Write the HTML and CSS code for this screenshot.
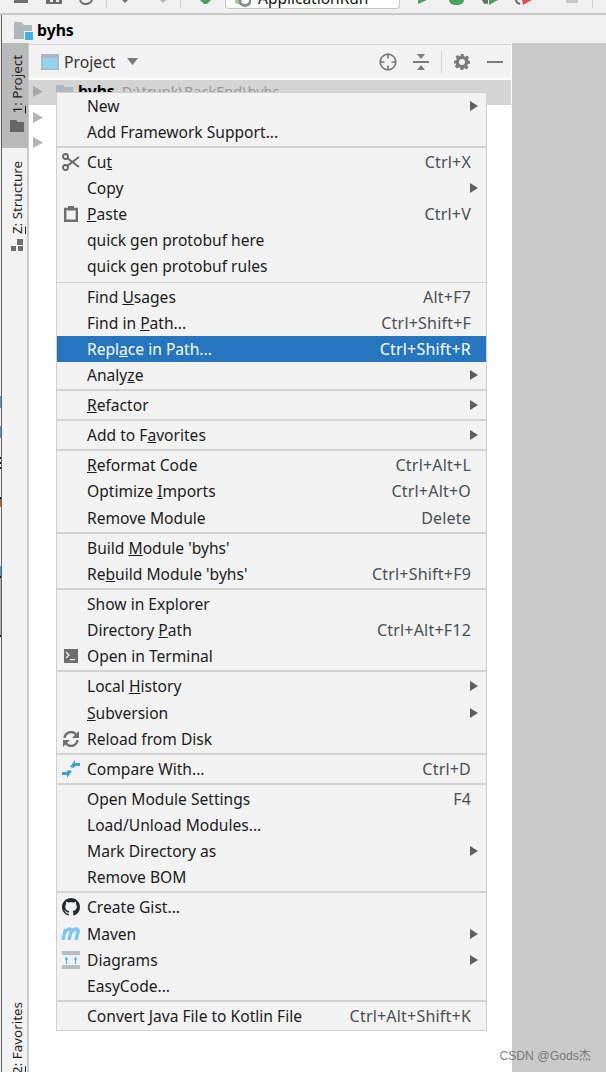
FILE: index.html
```html
<!DOCTYPE html>
<html lang="en">
<head>
<meta charset="utf-8">
<title>byhs</title>
<link rel="stylesheet" href="styles.css">
</head>
<body>
<div class="app">
  <header class="toolbar">
    <svg class="tb-left" width="225" height="13" viewBox="0 0 225 13">
      <rect x="14" y="0" width="14" height="3" fill="#6e6e6e"/>
      <path d="M46 0h16v4H46z" fill="#6e6e6e"/><path d="M50 0h3v2h-3zM56 0h3v2h-3z" fill="#eee"/>
      <path d="M80 0c1 3 3 4 5.500 4S91 3 92 0" fill="none" stroke="#6e6e6e" stroke-width="2"/>
      <rect x="106" y="0" width="1" height="8" fill="#cfcfcf"/>
      <path d="M122 0h6l-3 3z" fill="#6e6e6e"/>
      <path d="M160 0h6l-3 3z" fill="#b5b5b5"/>
      <rect x="180" y="0" width="1" height="8" fill="#cfcfcf"/>
      <path d="M200 0h11l-4 4h-3z" fill="#4f9e5c"/>
    </svg>
    <div class="run-config">
      <svg width="16" height="9" viewBox="0 0 16 9"><circle cx="3" cy="1" r="4" fill="#a9cf9f"/><circle cx="10" cy="1" r="5.500" fill="none" stroke="#8a8f93" stroke-width="3"/></svg>
      <span class="run-name">ApplicationRun</span>
    </div>
    <svg class="tb-right" width="206" height="13" viewBox="0 0 206 13">
      <path d="M18 0h9l-9 4z" fill="#4ca35a"/>
      <path d="M49 0h15c0 3-3 5-7.500 5S49 3 49 0z" fill="#4ca35a"/>
      <path d="M82 0h6v3l-4 1zM89 0h9l-9 5z" fill="#4ca35a"/><path d="M82 0h6v4l-4-1z" fill="#6e6e6e"/>
      <path d="M116 0c0 2 1 3 4 4" fill="none" stroke="#6e6e6e" stroke-width="2"/><path d="M122 0h10l-9 5z" fill="#e0505a"/>
      <rect x="166" y="0" width="12" height="3" fill="#c9c9c9"/>
      <rect x="192" y="0" width="1" height="8" fill="#cfcfcf"/>
    </svg>
  </header>

  <div class="crumb">
    <svg width="19" height="19" viewBox="0 0 19 19"><path d="M0 1h7l3 3h8v14H0z" fill="#adb7bf"/><rect x="11" y="11" width="8" height="8" fill="#3eb2e6"/><path d="M10 10h1v9h-1zM10 10h9v1h-9z" fill="#f0f0f0"/></svg>
    <span class="crumb-name">byhs</span>
  </div>

  <div class="workspace">
    <aside class="tool-strip">
      <div class="tool tool-on">
        <span class="tool-label"><u>1</u>: Project</span>
        <svg width="14" height="12" viewBox="0 0 14 12"><path d="M0 0h6l2 2h6v10H0z" fill="#666"/></svg>
      </div>
      <div class="tool tool-second">
        <span class="tool-label"><u>Z</u>: Structure</span>
        <svg width="14" height="13" viewBox="0 0 14 13"><path d="M7 0h6v6H7zM1 7h5v5H1zM8 7h5v5H8z" fill="#6e6e6e"/></svg>
      </div>
      <div class="tool tool-bottom">
        <span class="tool-label"><u>2</u>: Favorites</span>
      </div>
    </aside>
    <main class="panel">
      <div class="panel-head">
        <svg class="head-icon" width="18" height="16" viewBox="0 0 18 16"><rect width="18" height="16" fill="#adb7bf"/><rect x="1.500" y="4" width="15" height="10.500" fill="#93d3ef"/></svg>
        <span class="head-title">Project</span>
        <svg class="head-caret" width="11" height="7" viewBox="0 0 11 7"><path d="M0 0h11L5.500 7z" fill="#777"/></svg>
        <span class="head-space"></span>
        <svg width="18" height="18" viewBox="0 0 18 18" fill="none" stroke="#7a7a7a" stroke-width="1.700"><circle cx="9" cy="9" r="7.800"/><path d="M9 1v4.500M9 12.500V17M1 9h4.500M12.500 9H17"/></svg>
        <svg class="gap-collapse" width="16" height="18" viewBox="0 0 16 18"><path d="M0 8h16v2H0z" fill="#7a7a7a"/><path d="M4 1h8L8 6zM4 17h8l-4-5z" fill="#7a7a7a"/></svg>
        <span class="head-sep"></span>
        <svg class="gap-gear" width="16" height="16" viewBox="0 0 16 16"><path fill="#7a7a7a" fill-rule="evenodd" d="M6.500 0h3l.4 2.200 1.300.6L13.100 1.500l2.100 2.100-1.300 1.900.6 1.300L16 6.700v3l-2.200.4-.6 1.300 1.300 1.900-2.100 2.100-1.900-1.300-1.300.6L9.500 16h-3l-.4-2.200-1.300-.6-1.900 1.300L.8 12.400l1.300-1.900-.6-1.300L0 9.700v-3l2.200-.4.6-1.300L1.500 3.100l2.100-2.100 1.900 1.300 1.300-.6zM8 5a3 3 0 100 6 3 3 0 000-6z"/></svg>
        <svg class="gap-minus" width="16" height="2" viewBox="0 0 16 2"><rect width="16" height="2" fill="#7a7a7a"/></svg>
      </div>
      <div class="tree">
        <div class="tree-row tree-row-on">
          <svg class="tree-arrow" width="10" height="11" viewBox="0 0 10 11"><path d="M0 0l10 5.500L0 11z" fill="#a8a8a8"/></svg>
          <svg class="tree-folder" width="17" height="14" viewBox="0 0 17 14"><path d="M0 0h7l2 2h8v12H0z" fill="#adb7bf"/></svg>
          <span class="tree-name">byhs</span>
          <span class="tree-path">D:\trunk\BackEnd\byhs</span>
        </div>
        <div class="tree-row">
          <svg class="tree-arrow" width="10" height="11" viewBox="0 0 10 11"><path d="M0 0l10 5.500L0 11z" fill="#b4b4b4"/></svg>
        </div>
        <div class="tree-row">
          <svg class="tree-arrow" width="10" height="11" viewBox="0 0 10 11"><path d="M0 0l10 5.500L0 11z" fill="#b4b4b4"/></svg>
        </div>
      </div>
    </main>
    <div class="backdrop"></div>
  </div>

  <div class="desk-edge"></div>

  <nav class="menu">
    <div class="item"><span class="ico"></span><span class="lbl">New</span><i class="arrow"></i></div>
    <div class="item"><span class="ico"></span><span class="lbl">Add Framework Support...</span></div>
    <hr class="sep">
    <div class="item"><span class="ico"><svg width="18" height="18" viewBox="0 0 18 18" fill="none" stroke="#666" stroke-width="1.800"><circle cx="3.500" cy="3.500" r="2.500"/><circle cx="3.500" cy="14.500" r="2.500"/><path d="M5.500 5.200L17 14M5.500 12.800L17 4"/></svg></span><span class="lbl">Cu<u>t</u></span><span class="key">Ctrl+X</span></div>
    <div class="item"><span class="ico"></span><span class="lbl">Copy</span><i class="arrow"></i></div>
    <div class="item"><span class="ico"><svg width="14" height="16" viewBox="0 0 14 16" fill="none" stroke="#6e6e6e" stroke-width="2.400"><path d="M4 3H1.200v11.800h11.600V3H10"/><path d="M4 0h6v4.500H4z" fill="#6e6e6e" stroke="none"/></svg></span><span class="lbl"><u>P</u>aste</span><span class="key">Ctrl+V</span></div>
    <div class="item"><span class="ico"></span><span class="lbl">quick gen protobuf here</span></div>
    <div class="item"><span class="ico"></span><span class="lbl">quick gen protobuf rules</span></div>
    <hr class="sep">
    <div class="item"><span class="ico"></span><span class="lbl">Find <u>U</u>sages</span><span class="key">Alt+F7</span></div>
    <div class="item"><span class="ico"></span><span class="lbl">Find in <u>P</u>ath...</span><span class="key">Ctrl+Shift+F</span></div>
    <div class="item item-on"><span class="ico"></span><span class="lbl">Repl<u>a</u>ce in Path...</span><span class="key">Ctrl+Shift+R</span></div>
    <div class="item"><span class="ico"></span><span class="lbl">Analy<u>z</u>e</span><i class="arrow"></i></div>
    <hr class="sep">
    <div class="item"><span class="ico"></span><span class="lbl"><u>R</u>efactor</span><i class="arrow"></i></div>
    <hr class="sep">
    <div class="item"><span class="ico"></span><span class="lbl">Add to F<u>a</u>vorites</span><i class="arrow"></i></div>
    <hr class="sep">
    <div class="item"><span class="ico"></span><span class="lbl"><u>R</u>eformat Code</span><span class="key">Ctrl+Alt+L</span></div>
    <div class="item"><span class="ico"></span><span class="lbl">Optimize <u>I</u>mports</span><span class="key">Ctrl+Alt+O</span></div>
    <div class="item"><span class="ico"></span><span class="lbl">Remove Module</span><span class="key">Delete</span></div>
    <hr class="sep">
    <div class="item"><span class="ico"></span><span class="lbl">Build <u>M</u>odule 'byhs'</span></div>
    <div class="item"><span class="ico"></span><span class="lbl">Re<u>b</u>uild Module 'byhs'</span><span class="key">Ctrl+Shift+F9</span></div>
    <hr class="sep">
    <div class="item"><span class="ico"></span><span class="lbl">Show in Explorer</span></div>
    <div class="item"><span class="ico"></span><span class="lbl">Directory <u>P</u>ath</span><span class="key">Ctrl+Alt+F12</span></div>
    <div class="item"><span class="ico"><svg width="14" height="14" viewBox="0 0 14 14"><rect width="14" height="14" fill="#6e6e6e"/><path d="M2 3l3 3-3 3" fill="none" stroke="#f2f2f2" stroke-width="1.300"/><path d="M6 10h5v1.200H6z" fill="#f2f2f2"/></svg></span><span class="lbl">Open in Terminal</span></div>
    <hr class="sep">
    <div class="item"><span class="ico"></span><span class="lbl">Local <u>H</u>istory</span><i class="arrow"></i></div>
    <div class="item"><span class="ico"></span><span class="lbl"><u>S</u>ubversion</span><i class="arrow"></i></div>
    <div class="item"><span class="ico"><svg width="16" height="16" viewBox="0 0 16 16" fill="none" stroke="#6e6e6e" stroke-width="2.400"><path d="M1.500 7A6.500 6.500 0 0113 3.500"/><path d="M14.500 9A6.500 6.500 0 013 12.500"/><path d="M16 0v7H9z" fill="#6e6e6e" stroke="none"/><path d="M0 16V9h7z" fill="#6e6e6e" stroke="none"/></svg></span><span class="lbl">Reload from Disk</span></div>
    <hr class="sep">
    <div class="item"><span class="ico"><svg width="18" height="18" viewBox="0 0 18 18"><path d="M18 3h-5V0L8 7l4 1 1-2h5zM0 15h5v3l5-7-4-1-1 2H0z" fill="#3c9ed9"/></svg></span><span class="lbl">Compare With...</span><span class="key">Ctrl+D</span></div>
    <hr class="sep">
    <div class="item"><span class="ico"></span><span class="lbl">Open Module Settings</span><span class="key">F4</span></div>
    <div class="item"><span class="ico"></span><span class="lbl">Load/Unload Modules...</span></div>
    <div class="item"><span class="ico"></span><span class="lbl">Mark Directory as</span><i class="arrow"></i></div>
    <div class="item"><span class="ico"></span><span class="lbl">Remove BOM</span></div>
    <hr class="sep">
    <div class="item"><span class="ico"><svg width="18" height="18" viewBox="0 0 16 16"><path fill="#24292e" d="M8 0C3.580 0 0 3.580 0 8c0 3.540 2.290 6.530 5.470 7.590.4.070.55-.17.55-.38 0-.19-.01-.82-.01-1.490-2.010.37-2.530-.49-2.690-.94-.09-.23-.48-.94-.82-1.130-.28-.15-.68-.52-.01-.53.63-.01 1.080.58 1.230.82.720 1.210 1.870.87 2.330.66.07-.52.28-.87.51-1.070-1.780-.2-3.640-.89-3.640-3.950 0-.87.31-1.590.82-2.150-.08-.2-.36-1.020.08-2.120 0 0 .67-.21 2.200.82.64-.18 1.320-.27 2-.27.68 0 1.360.09 2 .27 1.530-1.040 2.200-.82 2.200-.82.44 1.100.16 1.920.08 2.120.51.56.82 1.270.82 2.150 0 3.070-1.870 3.750-3.650 3.950.29.25.54.73.54 1.480 0 1.070-.01 1.930-.01 2.200 0 .21.15.46.55.38A8.013 8.013 0 0016 8c0-4.420-3.580-8-8-8z"/></svg></span><span class="lbl">Create Gist...</span></div>
    <div class="item"><span class="ico"><svg width="20" height="13" viewBox="0 0 20 13" fill="none" stroke="#7cc7ea" stroke-width="3.400"><path d="M2 13L4.500 2M4.500 5C7 1 11 1 10 5L8 13M10.500 5C13 1 18 1 17 5L15 13"/></svg></span><span class="lbl">Maven</span><i class="arrow"></i></div>
    <div class="item"><span class="ico"><svg width="18" height="18" viewBox="0 0 18 18"><path d="M0 0h18v4H0zM0 14h18v4H0z" fill="#b5bfc7"/><path d="M4.500 6l-2 2.500h1.500V13h1V8.500h1.500zM13.500 6l-2 2.500H13V13h1V8.500h1.500z" fill="#3eb2e6"/></svg></span><span class="lbl">Diagrams</span><i class="arrow"></i></div>
    <div class="item"><span class="ico"></span><span class="lbl">EasyCode...</span></div>
    <hr class="sep">
    <div class="item"><span class="ico"></span><span class="lbl">Convert Java File to Kotlin File</span><span class="key">Ctrl+Alt+Shift+K</span></div>
  </nav>

  <div class="watermark">CSDN @Gods杰</div>
</div>
</body>
</html>
```
FILE: styles.css
```css
* { box-sizing: border-box; }
html, body { margin: 0; padding: 0; height: 100%; background: #fff; overflow: hidden; }
body { font-family: "Noto Sans", "Noto Sans CJK SC", sans-serif; color: #1b1b1b; }
.app { position: relative; width: 606px; height: 1072px; overflow: hidden; display: flex; flex-direction: column; }

.toolbar { height: 15px; flex: none; display: flex; align-items: flex-start; background: #f0f0f0; border-bottom: 2px solid #c8c8c8; }
.tb-left, .tb-right { display: block; flex: none; }
.run-config { width: 175px; height: 9px; flex: none; display: flex; align-items: flex-end; gap: 7px; padding-left: 9px; background: #fff; border: 1px solid #c6c6c6; border-top: 0; border-radius: 0 0 4px 4px; overflow: hidden; }
.run-name { font-size: 15.500px; line-height: 20px; color: #111; height: 9px; display: flex; align-items: flex-end; white-space: nowrap; }

.crumb { height: 28px; flex: none; display: flex; align-items: center; gap: 4px; padding: 2px 0 0 14px; background: #f0f0f0; }
.crumb-name { font-size: 15.750px; font-weight: 700; color: #000; }

.workspace { flex: 1; display: flex; min-height: 0; padding-left: 2px; }
.desk-edge { position: absolute; left: 0; top: 15px; bottom: 0; width: 2px; border-right: 1px solid #666; background: linear-gradient(to bottom,
  #eee 0 381px, #3f9bea 381px 393px, #eee 393px 411px, #3f9bea 411px 423px, #eee 423px 442px, #111 442px 444px, #eee 444px 447px, #111 447px 449px, #eee 449px 452px, #111 452px 454px, #eee 454px 482px, #111 482px 484px, #c06a10 484px 492px, #eee 492px 551px, #3f9bea 551px 561px, #111 561px 563px, #aaa 563px 620px, #111 620px 622px, #eee 622px); }

.tool-strip { width: 27px; flex: none; display: flex; flex-direction: column; background: #f2f2f2; border-right: 2px solid #cbcbcb; }
.tool { display: flex; flex-direction: column; align-items: center; padding-left: 4px; }
.tool-on { background: #b9b9b9; height: 105px; margin-right: -1px; padding-top: 12px; gap: 7px; }
.tool-second { padding-top: 13px; gap: 5px; }
.tool-bottom { margin-top: auto; height: 70px; overflow: hidden; }
.tool-label { writing-mode: vertical-rl; transform: rotate(180deg); font-size: 13.400px; line-height: 16px; color: #1f1f1f; white-space: nowrap; }
.tool-label u { text-underline-offset: 1px; }

.panel { width: 482px; flex: none; display: flex; flex-direction: column; background: #fff; }
.panel-head { height: 35px; flex: none; display: flex; align-items: center; padding: 2px 8px 0 12px; background: linear-gradient(#f0f0f0 0 1px, #d2d2d2 1px 2px, #f2f2f2 2px); }
.head-title { font-size: 15.750px; color: #333; margin-left: 5px; }
.head-caret { margin-left: 12px; }
.head-space { flex: 1; }
.gap-collapse { margin-left: 16px; }
.head-sep { width: 1px; height: 22px; background: #d4d4d4; margin-left: 12px; }
.gap-gear { margin-left: 12px; }
.gap-minus { margin-left: 17px; }

.tree { flex: 1; padding-top: 2px; }
.tree-row { height: 25px; display: flex; align-items: center; padding-left: 4px; }
.tree-row-on { background: #d4d4d4; align-items: flex-start; padding-top: 6px; overflow: hidden; }
.tree-arrow { flex: none; }
.tree-folder { margin-left: 13px; margin-top: -1px; }
.tree-name { font-weight: 700; font-size: 15.750px; line-height: 20px; color: #000; margin-left: 5px; margin-top: -5px; }
.tree-path { font-size: 14.500px; line-height: 20px; color: #999; margin-left: 7px; margin-top: -5px; }

.backdrop { flex: 1; margin-left: 1px; background: #c9c9c9; }

.menu { position: absolute; left: 56px; top: 92px; width: 431px; height: 939px; background: #f2f2f2; border: 1px solid #d0d0d0; font-size: 15.600px; }
.item { height: 26.200px; display: flex; align-items: center; padding-right: 15px; white-space: nowrap; }
.item:first-child { margin-top: -.6px; }
.item u { text-underline-offset: 1px; text-decoration-thickness: 1px; }
.ico { width: 30px; flex: none; display: flex; align-items: center; justify-content: center; padding-right: 2px; }
.ico svg { display: block; }
.lbl { flex: 1; color: #1c1c1c; }
.key { color: #4a4f55; font-size: 16px; letter-spacing: .2px; }
.arrow { width: 0; height: 0; flex: none; margin-right: -7px; border-left: 8px solid #5f5f5f; border-top: 5px solid transparent; border-bottom: 5px solid transparent; }
.item-on { background: #2675bf; }
.item-on .lbl, .item-on .key { color: #fff; }
.sep { height: 3.860px; margin: 0; border: 0; background: linear-gradient(#f2f2f2 0 1.500px, #d2d2d2 1.500px 3px, #f2f2f2 3px); }

.watermark { position: absolute; right: 15px; top: 1048px; font-family: "Liberation Sans", "Noto Sans CJK SC", sans-serif; font-size: 12.200px; line-height: 16px; color: rgba(90, 90, 90, .75); white-space: nowrap; }
```
